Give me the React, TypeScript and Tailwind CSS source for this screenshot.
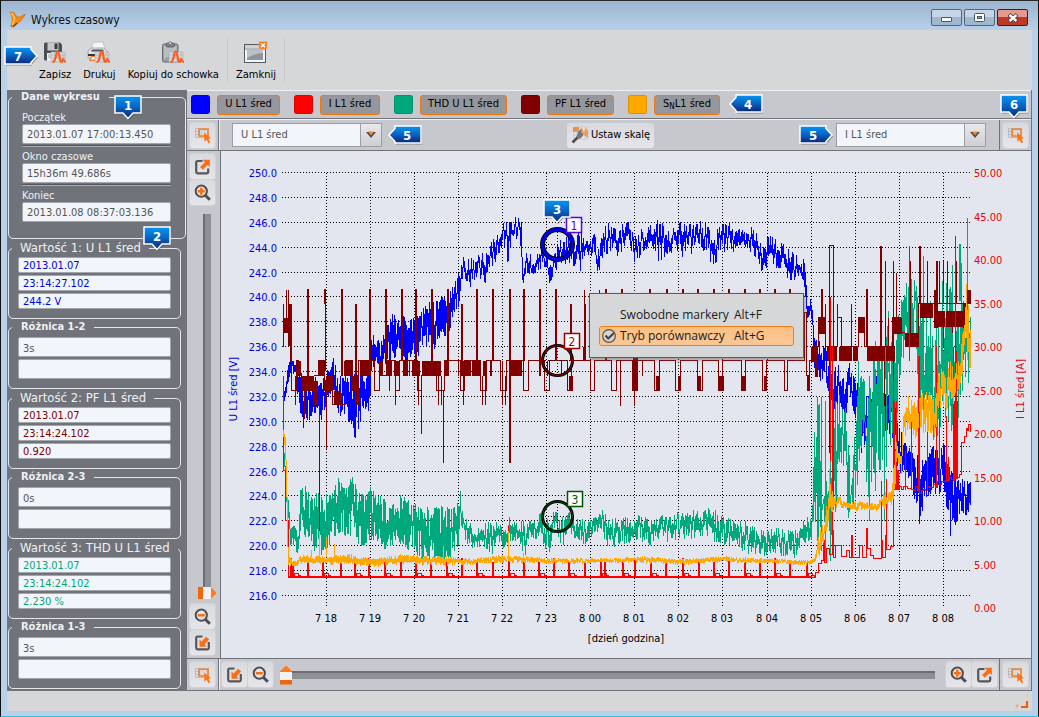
import React from "react";

type Dir = "down" | "right" | "left";

const UI = "font-['DejaVu_Sans_Condensed','DejaVu_Sans',sans-serif]";

/* ---------- numbered callouts ---------- */

function CalloutShape({ n, dir }: { n: number; dir: Dir }) {
  const shape = {
    down: "M2 2H28V19H20L15 24.500L10 19H2Z",
    right: "M2 2H28V4.500L34 11L28 17.500V19H2Z",
    left: "M34 2H8V4.500L2 11L8 17.500V19H34Z",
  }[dir];
  return (
    <>
      <defs>
        <linearGradient id={"callout" + dir + n} x1="0" y1="0" x2="0" y2="1">
          <stop offset="0" stopColor="#0795f0" />
          <stop offset="0.45" stopColor="#0868c8" />
          <stop offset="1" stopColor="#0b257a" />
        </linearGradient>
      </defs>
      <path d={shape} transform="translate(1 1.500)" fill="#333" opacity="0.45" />
      <path d={shape} fill={"url(#callout" + dir + n + ")"} stroke="#fff" strokeWidth="1.5" />
      <text
        x={dir === "left" ? 20 : 15}
        y="15.500"
        textAnchor="middle"
        fill="#fff"
        className="font-['DejaVu_Sans_Condensed',sans-serif] text-[13px] font-bold"
      >
        {n}
      </text>
    </>
  );
}

function Callout({ n, dir, className = "" }: { n: number; dir: Dir; className?: string }) {
  return (
    <svg viewBox="0 0 36 27" className={"pointer-events-none h-[27px] w-9 shrink-0 " + className}>
      <CalloutShape n={n} dir={dir} />
    </svg>
  );
}

/* ---------- icons ---------- */

const Pulse = () => (
  <g>
    <path d="M8 11h14v10H8z" fill="#d9dbde" stroke="#a5a7ab" strokeWidth="0.6" />
    <path d="M8 14h14M8 17h14M12 11v10M16 11v10M20 11v10" stroke="#a9abb0" strokeWidth="0.6" />
    <path
      d="M9.500 21C13.500 21.500 12.500 10.500 14.800 10.500C17 10.500 16.200 21 18.200 21C19.800 21 19 18 20 18C21 18 20.500 21 23 21"
      fill="none"
      stroke="#ff5a14"
      strokeWidth="2.100"
    />
  </g>
);

const SaveIcon = () => (
  <svg viewBox="0 0 24 24" className="size-6">
    <path d="M1 3Q1 1.500 2.500 1.500H17L19 3.500V19.500H2.500Q1 19.500 1 18Z" fill="#4c4e53" />
    <path d="M4.500 1.500h11v8h-11z" fill="#c6c8cb" />
    <path d="M11.500 2.500h3v5.500h-3z" fill="#3a3b3f" />
    <path d="M4 12h12v8H4z" fill="#eceded" />
    <path d="M5 14h9M5 16h9" stroke="#999" strokeWidth="0.800" />
    <Pulse />
  </svg>
);

const PrintIcon = () => (
  <svg viewBox="0 0 24 24" className="size-6">
    <path d="M5 8V3L8 1H16L18 8Z" fill="#f6f6f6" stroke="#b8babd" strokeWidth="0.800" />
    <path d="M1 10L4 7H17L20 10V17H1Z" fill="#e3e4e6" stroke="#8f9196" strokeWidth="0.700" />
    <path d="M5 8.500H16L17 10.500H4Z" fill="#55575c" />
    <path d="M1 14H14" stroke="#303236" strokeWidth="2" />
    <path d="M4 15H14L15 20H2Z" fill="#ff7a2a" />
    <path d="M5 16H13L13.500 18.500H4Z" fill="#fff" />
    <Pulse />
  </svg>
);

const CopyIcon = () => (
  <svg viewBox="0 0 24 24" className="size-6">
    <rect x="1.500" y="3" width="15.500" height="18" rx="1.500" fill="#9aa0a7" stroke="#666a70" />
    <path d="M3 5L15.500 5V11L3 18Z" fill="#b9bec5" />
    <rect x="5" y="2" width="8.500" height="4" rx="1.500" fill="#80858c" stroke="#54575c" strokeWidth="0.800" />
    <circle cx="9.200" cy="2.200" r="1.500" fill="#dfe1e3" stroke="#55585d" strokeWidth="0.700" />
    <Pulse />
  </svg>
);

const CloseIcon = () => (
  <svg viewBox="0 0 24 24" className="size-6">
    <rect x="0.500" y="3.500" width="21" height="18" fill="#f4f5f6" stroke="#55585e" />
    <path d="M1 4h20v3H1z" fill="#cfd1d4" />
    <path d="M3 9h16v10H3z" fill="#8f959d" />
    <path d="M3 9H19V12Q11 12 3 17Z" fill="#bcc1c7" />
    <path d="M1 8h20" stroke="#5d6066" strokeWidth="0.800" />
    <rect x="15" y="0.500" width="8" height="7.500" fill="#f57a1c" stroke="#ffb27a" strokeWidth="0.600" />
    <path d="M17 2.300L21 6.300M21 2.300L17 6.300" stroke="#fff" strokeWidth="1.500" />
  </svg>
);

const SelectIcon = () => (
  <svg viewBox="0 0 18 18" className="size-[18px]">
    <path d="M1.500 2.500h13v9h-13zM1.500 5.500h13M1.500 8.500h13M4.500 2.500v9M8.500 2.500v9" fill="none" stroke="#b0b2b8" strokeWidth="0.800" />
    <rect x="5.200" y="3.200" width="8.800" height="6.800" fill="#d9d9dd" stroke="#f0883a" strokeWidth="1.700" />
    <path d="M10.200 6.500L17 12.200L14.400 12.700L16.200 16.200L14.400 17.200L12.700 13.800L10.400 15.800Z" fill="#ff7414" />
  </svg>
);

const BoxArrow = ({ inward = false }: { inward?: boolean }) => (
  <svg viewBox="0 0 18 18" className="size-[18px]">
    <path
      d={inward ? "M8.500 2.500H3.500Q2.200 2.500 2.200 4V14Q2.200 15.300 3.500 15.300H13.500Q14.800 15.300 14.800 14V8" : "M8.500 3H3.500Q2.200 3 2.200 4.500V14Q2.200 15.300 3.500 15.300H12.800Q14.200 15.300 14.200 14V10.500"}
      fill="none"
      stroke="#56575d"
      strokeWidth="2.200"
    />
    {inward ? (
      <path d="M5.500 12.800V5.500L7.600 7.400L12.200 2.700L15.200 5.600L10.600 10.400L12.700 12.800Z" fill="#ff6b12" />
    ) : (
      <path d="M15.800 1.800V9L13.500 6.900L8.900 11.700L6 9L10.900 4.200L8.700 1.800Z" fill="#ff6b12" />
    )}
  </svg>
);

const Lens = ({ plus = false }: { plus?: boolean }) => (
  <svg viewBox="0 0 18 18" className="size-[18px]">
    <path d="M11 11L15.800 15.800" stroke="#4c4e54" strokeWidth="3" />
    <circle cx="7.300" cy="7.200" r="5.600" fill="#e9e4e1" stroke="#4c4e54" strokeWidth="2" />
    <path d={plus ? "M3.800 7.200h7M7.300 3.700v7" : "M3.800 7.200h7"} stroke="#f66f16" strokeWidth="2.500" />
  </svg>
);

const ScaleIcon = () => (
  <svg viewBox="0 0 18 18" className="size-[18px]">
    <path d="M3 1h14v12H3z" fill="#e9e9e9" stroke="#c9c9cc" strokeWidth="0.700" />
    <path d="M2 1H8V6H2Z" fill="#f28a3c" />
    <path d="M9 9V4L11 1.500L13 7L15 1.500L17 5V12L13 9Z" fill="#f89445" />
    <path d="M6 1v12M10 1v12M14 1v12M3 5h14M3 9h14" stroke="#b4b4b8" strokeWidth="0.600" />
    <path d="M1.500 16.500L8 10" stroke="#4b4d52" strokeWidth="2.600" />
    <path d="M5.500 11L7 6L10.500 2.500L10 6L12 8L12 10L8.500 13Z" fill="#74767c" />
  </svg>
);

function ToolButton({ label, children }: { label: string; children: React.ReactNode }) {
  return (
    <button
      aria-label={label}
      className="flex size-[25px] shrink-0 items-center justify-center rounded-[3px] bg-linear-to-b from-[#d9dadd] to-[#e6e6ea] shadow-[0_0_0_1px_#d2d2d6]"
    >
      {children}
    </button>
  );
}

/* ---------- title bar and tool bar ---------- */

function TitleBar() {
  const frame = "flex h-[17px] w-[31px] items-center justify-center rounded-[2px] border";
  return (
    <header className="flex h-[30px] shrink-0 items-center border-t border-[#26282c] bg-linear-to-b from-[#9cb5d0] to-[#b8cfe8] pt-2 pr-[10px] pl-2">
      <svg viewBox="0 0 18 18" className="size-[18px]">
        <path d="M1.500 1L5 1.500L7 5L10 6.500L16.500 3L12 9.500L5 15.500L2 15.500L3.500 9Z" fill="#f68c12" stroke="#d8690a" strokeWidth="0.800" />
        <path d="M2.500 2L5.500 7L3.500 14" fill="none" stroke="#ffc44a" strokeWidth="1.600" />
        <path d="M4 15.500L8 12" stroke="#5d4227" strokeWidth="1.200" />
      </svg>
      <h1 className="ml-1 grow text-[12px] leading-4 font-normal text-[#111]">Wykres czasowy</h1>
      <div className="mb-1 flex gap-[2px]">
        <button aria-label="Minimalizuj" className={frame + " border-[#56677c] bg-linear-to-b from-[#c4d5e7] from-50% to-[#9fb8d2] to-50%"}>
          <span className="mt-1 h-[5px] w-[11px] rounded-[1px] border border-[#4a5564] bg-white" />
        </button>
        <button aria-label="Maksymalizuj" className={frame + " border-[#56677c] bg-linear-to-b from-[#c4d5e7] from-50% to-[#9fb8d2] to-50%"}>
          <svg viewBox="0 0 11 9" className="h-[9px] w-[11px]">
            <rect x="0.500" y="0.500" width="10" height="8" rx="1" fill="#fff" stroke="#4a5564" />
            <rect x="3.500" y="3.500" width="4" height="2" fill="#8fa9c5" stroke="#4a5564" />
          </svg>
        </button>
        <button aria-label="Zamknij okno" className={frame + " border-[#5a1410] bg-linear-to-b from-[#e39a8c] from-50% to-[#bc3a26] to-50%"}>
          <svg viewBox="0 0 12 10" className="h-[10px] w-3">
            <path d="M2 1.500L10 8.500M10 1.500L2 8.500" stroke="#4a3a40" strokeWidth="4" />
            <path d="M2.500 2L9.500 8M9.500 2L2.500 8" stroke="#fff" strokeWidth="2.400" />
          </svg>
        </button>
      </div>
    </header>
  );
}

function Toolbar() {
  const item = "flex flex-col items-center gap-[2px] text-[11px] leading-4 text-black";
  return (
    <div className="relative flex h-[60px] shrink-0 bg-[#d6d7d9] pt-[11px] pl-8">
      <Callout n={7} dir="right" className="absolute top-[15px] -left-1" />
      <div className="flex items-start gap-3">
        <button className={item}>
          <SaveIcon />
          Zapisz
        </button>
        <button className={item}>
          <PrintIcon />
          Drukuj
        </button>
        <button className={item}>
          <CopyIcon />
          Kopiuj do schowka
        </button>
      </div>
      <div className="mx-2 -mt-1 h-[46px] w-px bg-[#c9cacd]" />
      <button className={item + " self-start"}>
        <CloseIcon />
        Zamknij
      </button>
      <div className="mx-2 -mt-1 h-[46px] w-px bg-[#c9cacd]" />
    </div>
  );
}

/* ---------- side panel ---------- */

const field = "block w-full rounded-[2px] border border-[#a3a7ad] bg-[#f2f5fa] text-[11px] outline-none";

function TimeField({ label, value, last }: { label: string; value: string; last?: boolean }) {
  return (
    <div className={last ? "" : "mb-[3px]"}>
      <label className="block text-[11px] leading-[13px] text-[#eff1f4]">
        {label}
        <input readOnly defaultValue={value} className={field + " h-5 px-1 pt-px text-[#555]"} />
      </label>
      {!last && <div className="mt-px h-[2px] border-t border-[#54565c] bg-[#a9abb0]" />}
    </div>
  );
}

function ValueGroup({ title, values, color }: { title: string; values: string[]; color: string }) {
  return (
    <fieldset className="mr-[6px] ml-px min-w-0 rounded-[5px] border border-[#e4e6ea] px-[9px] pb-[9px]">
      <legend className="ml-[-6px] px-2 text-[13px] leading-4 whitespace-nowrap text-[#eff1f4]">{title}</legend>
      <div className="flex flex-col gap-[2px] pt-px">
        {values.map((v, i) => (
          <input key={i} aria-label={title + " " + (i + 1)} readOnly defaultValue={v} className={field + " h-4 px-1 pt-[2px] " + color} />
        ))}
      </div>
    </fieldset>
  );
}

function DiffGroup({ title, value }: { title: string; value: string }) {
  return (
    <fieldset className="mr-[6px] ml-px min-w-0 rounded-[5px] border border-[#e4e6ea] px-[9px] pb-[9px]">
      <legend className="ml-[-6px] px-[9px] text-[11px] leading-[14px] font-bold text-[#eff1f4]">{title}</legend>
      <div className="flex flex-col gap-[2px] pt-[3px]">
        <input aria-label={title + " czas"} readOnly defaultValue={value} className={field + " h-5 px-1 pt-[2px] text-[#555]"} />
        <input aria-label={title + " wartość"} readOnly className={field + " h-5 px-1 pt-[2px] text-[#555]"} />
      </div>
    </fieldset>
  );
}

function SidePanel() {
  return (
    <aside className="relative flex w-[180px] shrink-0 flex-col gap-px bg-[#70737a]">
      <fieldset className="mr-px ml-px min-w-0 rounded-[5px] border border-[#e4e6ea] pr-[14px] pb-4 pl-[13px]">
        <legend className="ml-[-10px] px-[9px] text-[11px] leading-[14px] font-bold text-[#eff1f4]">Dane wykresu</legend>
        <div className="pt-[7px]">
          <TimeField label="Początek" value="2013.01.07 17:00:13.450" />
          <TimeField label="Okno czasowe" value="15h36m 49.686s" />
          <TimeField label="Koniec" value="2013.01.08 08:37:03.136" last />
        </div>
      </fieldset>
      <ValueGroup title="Wartość 1: U L1 śred" values={["2013.01.07", "23:14:27.102", "244.2 V"]} color="text-[#0000e6]" />
      <DiffGroup title="Różnica 1-2" value="3s" />
      <ValueGroup title="Wartość 2: PF L1 śred" values={["2013.01.07", "23:14:24.102", "0.920"]} color="text-[#800000]" />
      <DiffGroup title="Różnica 2-3" value="0s" />
      <ValueGroup title="Wartość 3: THD U L1 śred" values={["2013.01.07", "23:14:24.102", "2.230 %"]} color="text-[#00a57b]" />
      <DiffGroup title="Różnica 1-3" value="3s" />
      <Callout n={1} dir="down" className="absolute top-1 left-[106px]" />
      <Callout n={2} dir="down" className="absolute top-[135px] left-[135px]" />
    </aside>
  );
}

/* ---------- chart ---------- */

function rng(seed: number) {
  let s = seed;
  return () => {
    s = (s * 1664525 + 1013904223) % 4294967296;
    return s / 4294967296;
  };
}

type Band = [number, number, number];
type Line = [number, number, number];

/* Noisy line: each column covers a random stretch inside the upper and lower envelope. */
function bandPath(keys: Band[], seed: number, fill: number, holes = 0): string {
  const r = rng(seed);
  let d = "";
  let k = 0;
  for (let x = keys[0][0]; x <= keys[keys.length - 1][0]; x++) {
    while (k < keys.length - 2 && keys[k + 1][0] <= x) k++;
    const [x0, t0, b0] = keys[k];
    const [x1, t1, b1] = keys[k + 1];
    const f = (x - x0) / (x1 - x0);
    const top = t0 + (t1 - t0) * f;
    const h = b0 + (b1 - b0) * f - top;
    const len = h * Math.min(1, fill * (0.5 + r()));
    const a = Math.round(top + (h - len) * r());
    const b = Math.round(a + len);
    if (r() < holes) continue;
    d += (d ? "L" : "M") + x + " " + a + "L" + x + " " + b;
  }
  return d;
}

const voltage: Band[] = [
  [283, 384, 410], [288, 362, 385], [291, 356, 366], [296, 364, 385], [300, 370, 420], [306, 378, 434], [312, 376, 412], [318, 374, 416], [323, 378, 426],
  [329, 362, 402], [333, 352, 392], [338, 374, 412], [344, 378, 428], [350, 372, 430], [355, 368, 442], [360, 360, 420], [364, 370, 408], [370, 358, 412], [371, 333, 376],
  [375, 336, 362], [380, 342, 372], [385, 328, 364], [390, 313, 364], [400, 314, 352], [406, 312, 362], [414, 318, 358], [423, 303, 352], [432, 299, 352],
  [440, 294, 338], [447, 291, 340], [452, 285, 318], [459, 268, 305],
];

const voltageNight: Band[] = [
  [459, 268, 300], [463, 256, 280], [470, 255, 290], [478, 251, 275], [484, 246, 284], [493, 238, 266],
  [500, 228, 253], [506, 216, 244], [508, 222, 282], [512, 219, 238], [519, 212, 238], [521, 222, 270], [522, 270, 290], [524, 250, 275], [535, 255, 273], [541, 244, 270],
  [546, 252, 275], [551, 260, 288], [557, 244, 266], [563, 236, 264], [570, 230, 264], [575, 242, 266], [580, 218, 270], [585, 243, 256], [592, 230, 258],
  [597, 240, 272], [607, 222, 254], [612, 226, 252], [618, 230, 256], [626, 217, 244], [634, 232, 265], [642, 226, 252], [650, 222, 248], [659, 219, 264],
  [670, 231, 252], [678, 220, 258], [690, 223, 254], [700, 216, 246], [712, 232, 268], [722, 218, 252], [728, 220, 250], [735, 230, 258], [745, 228, 250],
  [753, 226, 254], [762, 238, 273], [773, 234, 266], [780, 241, 270], [790, 248, 287], [798, 257, 278], [803, 258, 282],
];

const voltageLate: Band[] = [
  [803, 258, 282], [804, 262, 306], [808, 300, 320], [812, 295, 325],
  [814, 335, 370], [821, 342, 384], [824, 336, 378], [828, 358, 392], [833, 368, 418], [838, 362, 412], [845, 378, 420], [849, 363, 392], [856, 378, 425],
  [860, 386, 450], [864, 395, 460], [870, 390, 420], [877, 368, 398], [883, 390, 430], [891, 395, 435], [896, 408, 470], [905, 440, 475], [910, 446, 482], [916, 450, 508],
  [919, 455, 530], [925, 458, 500], [932, 446, 492], [938, 448, 500], [943, 440, 488], [948, 465, 540], [955, 474, 528], [960, 474, 512], [965, 478, 518], [970, 474, 512],
];

const distortion: Band[] = [
  [283, 448, 465], [284, 450, 465], [287, 480, 520], [290, 528, 545], [294, 525, 545], [298, 535, 557], [300, 490, 530], [304, 484, 536], [310, 496, 536], [314, 498, 550],
  [318, 488, 545], [323, 503, 560], [326, 494, 550], [331, 494, 540], [338, 478, 532], [345, 490, 535], [352, 474, 540], [358, 492, 545], [365, 496, 545],
  [370, 484, 540], [376, 496, 540], [383, 496, 550], [390, 508, 545], [400, 494, 545], [405, 491, 550], [412, 503, 550], [420, 504, 560], [430, 508, 558],
  [440, 506, 562], [450, 508, 562], [456, 506, 548], [458, 500, 545],
];

const distortionNight: Band[] = [
  [458, 500, 545], [460, 488, 520], [463, 516, 538], [468, 520, 545], [475, 530, 548], [482, 524, 545], [492, 518, 556], [500, 524, 548],
  [511, 514, 545], [518, 523, 542], [523, 520, 560], [530, 520, 538], [541, 512, 540], [548, 518, 556], [556, 508, 532], [561, 518, 552], [567, 510, 532],
  [575, 516, 538], [580, 518, 548], [592, 516, 536], [601, 508, 530], [607, 516, 546], [618, 516, 548], [632, 514, 542], [646, 516, 545], [660, 515, 543],
  [675, 512, 540], [690, 510, 538], [706, 506, 538], [716, 510, 545], [730, 516, 544], [745, 520, 552], [755, 524, 554], [765, 528, 557], [775, 526, 554],
  [790, 530, 560], [800, 528, 558], [804, 518, 545], [812, 505, 545],
];

const distortionLate: Band[] = [
  [812, 500, 545], [815, 396, 530], [819, 400, 525], [821, 450, 530], [826, 480, 540], [832, 470, 540], [835, 380, 520], [840, 392, 460], [845, 405, 470], [848, 440, 530],
  [855, 430, 505], [858, 375, 500], [863, 360, 445], [867, 380, 500], [875, 340, 490], [880, 325, 480], [885, 310, 485], [890, 320, 450], [895, 310, 445], [899, 300, 440],
  [903, 288, 360], [910, 276, 345], [915, 280, 350], [918, 290, 420], [922, 292, 430], [928, 310, 432], [934, 330, 445], [938, 300, 440], [943, 270, 420],
  [949, 262, 415], [952, 270, 430], [956, 330, 420], [960, 243, 420], [964, 300, 410], [967, 280, 400], [970, 310, 396],
];

const power: Band[] = [
  [283, 424, 440], [285, 430, 455], [287, 500, 540], [288, 553, 565], [292, 561, 566], [296, 560, 566], [300, 555, 563], [310, 554, 563], [320, 556, 564], [350, 554, 564],
  [376, 558, 566], [400, 554, 563], [440, 556, 565], [458, 557, 564], [461, 558, 567], [475, 558, 563], [500, 555, 562], [560, 558, 563], [600, 558, 562], [640, 556, 562],
  [680, 559, 564], [720, 556, 561], [780, 559, 563], [808, 560, 565], [814, 558, 562], [819, 530, 556], [824, 518, 542], [827, 492, 530], [829, 476, 510], [832, 488, 512],
  [838, 495, 505], [846, 502, 510], [860, 501, 510], [876, 503, 510], [884, 492, 508], [892, 490, 508], [894, 430, 490], [897, 445, 475], [901, 456, 474],
  [903, 412, 450], [908, 395, 430], [914, 402, 440], [920, 393, 432], [928, 386, 436], [933, 395, 440], [939, 368, 420], [945, 372, 418], [950, 360, 400],
  [955, 368, 405], [960, 340, 390], [963, 325, 372], [966, 285, 362], [970, 320, 372],
];

const pulses = [290, 292, 307, 322, 340, 354, 368, 384, 400, 415, 430, 446, 461, 476, 492, 508, 523, 538, 553, 568, 584, 600, 604, 622, 634, 650, 665, 682, 698, 713, 728, 744, 759, 774, 789, 806];

function currentPath(): string {
  let d = "M283 400V470H285V520H288V577";
  pulses.forEach((x, i) => {
    d += `H${x}V${i % 3 ? 562 : 558}h1V577`;
    if (i % 2) d += "h1v-4h4v2h2v2";
  });
  d += "H811V577H815V572H818V563H821V560H823V540H824V562H826V548H829V554H832V530H833V557H835V545H841V556H846V550H849V557H851V535H852V557H859V545H862V557H866V528H867V548H870V555H873V558H881V540H882V557H885V535H886V549H890V546H893V402H894V489H897V470H898V489";
  const r = rng(5);
  let x = 899;
  while (x < 962) {
    const y = Math.round((x < 920 ? 490 : 494 - (x - 920) * 0.4) - r() * 5);
    d += `V${y}H${x}`;
    x += 2;
  }
  d += "V442H964V436H966V428H967V430H968V424H970V431";
  return d;
}

const powerFactorLine =
  "M283 303V346M286 289V330M288 289V345M290 303V360M291 345V390H296V360H298V375H300M313 375H318V360H324V390H327M332 375V404H345V360H352M352 375V390H357V404H358V360H374V390H379V375H386V360H395V390H399V360H417V390H421V375H436V390H444V360H460V390H464V360H480V390H486V360H500V390H506V360H523V390H528V360H544V390H549V360H567V390H571V360H590V390H594V360H611V390H616V360H632V390H637V360H654V390H659V360H675V390H680V360H697V390H702V360H718V390H722V360H741V390H745V360H762V390H766V360H784V390H787V360H804V312H806V375H809V360H812V346H818V317H825V346H829V245H833V346H837V303M837 317H841V346H858V317H864V346H892V317H900V332H904M918 332V303H970";

const powerFactorBlocks: [number, number, number, number][] = [
  [283, 317, 6, 15], [287, 303, 4, 42], [296, 360, 4, 15], [300, 375, 13, 15], [312, 380, 5, 24], [318, 360, 6, 15], [327, 375, 5, 15], [333, 390, 7, 14], [343, 360, 9, 15],
  [350, 375, 7, 15], [354, 390, 5, 14], [359, 360, 9, 15], [378, 360, 4, 15], [386, 360, 5, 15], [393, 360, 5, 15], [402, 360, 5, 15], [411, 360, 8, 15], [421, 360, 19, 15],
  [444, 360, 4, 15], [462, 360, 7, 15], [471, 360, 8, 15], [482, 360, 4, 15], [510, 360, 11, 15], [568, 375, 4, 15], [632, 356, 5, 34], [655, 375, 3, 15],
  [677, 375, 3, 15], [697, 375, 3, 15], [718, 375, 5, 15], [741, 375, 3, 15], [763, 375, 3, 15], [806, 375, 3, 15],
  [582, 346, 3, 14], [810, 346, 6, 15], [818, 317, 7, 16], [814, 360, 3, 16], [826, 346, 10, 14], [838, 346, 13, 14], [852, 346, 5, 14], [858, 317, 6, 15], [866, 346, 9, 14],
  [875, 346, 9, 14], [885, 346, 9, 14], [892, 317, 9, 16], [904, 332, 6, 14], [910, 332, 8, 14], [919, 303, 5, 14], [924, 303, 8, 14], [933, 303, 4, 24], [937, 310, 7, 16],
  [945, 310, 17, 16], [933, 289, 4, 14], [962, 303, 4, 24], [966, 289, 4, 14],
];

const powerFactorPeaks: Line[] = [
  [307, 288, 375], [324, 288, 303], [341, 288, 375], [355, 303, 375], [369, 288, 375], [385, 288, 360], [401, 288, 360], [415, 288, 375], [431, 288, 375], [447, 288, 375],
  [461, 303, 375], [476, 288, 360], [492, 288, 360], [509, 288, 462], [523, 288, 360], [539, 288, 375], [555, 288, 360], [570, 303, 360], [584, 303, 360], [605, 288, 360],
  [621, 288, 300], [649, 288, 300], [666, 288, 300], [682, 288, 300], [697, 288, 300], [713, 288, 300], [728, 288, 300], [744, 288, 300], [759, 288, 300], [774, 288, 300],
  [789, 288, 300], [821, 288, 317], [866, 288, 346], [880, 245, 346], [919, 245, 303], [936, 260, 303],
];

const powerFactorSpikes: Line[] = [
  [325, 303, 370], [584, 289, 303], [599, 289, 300], [295, 375, 404], [304, 375, 418], [319, 390, 530], [326, 375, 448], [395, 360, 404], [418, 375, 404], [421, 375, 433],
  [438, 375, 404], [441, 375, 404], [443, 390, 462], [463, 375, 404], [482, 375, 404], [485, 375, 404], [505, 375, 404], [547, 360, 375], [389, 360, 390], [409, 360, 375],
  [458, 360, 375], [470, 360, 375], [490, 360, 375], [491, 360, 375], [500, 360, 375], [502, 360, 404], [561, 360, 375], [594, 360, 375],
  [620, 360, 405], [634, 375, 405], [642, 360, 375], [825, 303, 346], [829, 360, 452], [851, 303, 346],
  [885, 260, 346], [888, 317, 346], [893, 260, 404], [896, 272, 317], [884, 346, 405], [910, 260, 332], [927, 260, 303], [939, 260, 303],
  [943, 260, 303], [947, 260, 303], [956, 260, 303], [943, 317, 346], [952, 317, 332], [835, 346, 360], [807, 375, 390],
];

const distortionSpikes: Line[] = [
  [817, 396, 540], [821, 396, 550], [825, 400, 560], [830, 430, 560], [858, 360, 420], [869, 375, 520], [884, 345, 520], [888, 310, 345], [911, 278, 345], [923, 255, 400],
  [930, 300, 420], [942, 280, 400], [952, 264, 400], [959, 243, 300], [960, 243, 300], [967, 217, 330], [818, 405, 540], [875, 340, 360], [948, 395, 420], [951, 400, 430],
];

const currentSpikes: Line[] = [
  [830, 296, 460], [832, 345, 545], [833, 400, 500], [893, 380, 489], [896, 400, 489], [905, 450, 489], [909, 245, 360], [911, 410, 489], [918, 355, 490], [919, 355, 489],
  [927, 415, 490], [936, 345, 487], [939, 400, 480], [946, 415, 480], [953, 346, 480], [954, 400, 480], [955, 235, 478], [956, 350, 478], [957, 400, 478], [948, 456, 480], [508, 525, 540], [895, 448, 489], [881, 480, 555], [886, 478, 545],
];

const powerSpikes: Line[] = [
  [319, 530, 560], [326, 536, 556], [334, 543, 556], [311, 549, 556], [421, 548, 556], [443, 545, 558], [508, 530, 558], [829, 468, 500], [523, 552, 556], [966, 283, 300],
];

const vlines = (list: Line[]) => list.map(([x, a, b]) => `M${x} ${a}V${b}`).join("");

const hourLabels = ["7 18", "7 19", "7 20", "7 21", "7 22", "7 23", "8 00", "8 01", "8 02", "8 03", "8 04", "8 05", "8 06", "8 07", "8 08"];
const voltLabels = Array.from({ length: 18 }, (_, i) => (250 - 2 * i).toFixed(1));
const ampLabels = Array.from({ length: 11 }, (_, i) => (50 - 5 * i).toFixed(2));

function Marker({ n, x, y, color, bx, by }: { n: number; x: number; y: number; color: string; bx: number; by: number }) {
  return (
    <g>
      <circle cx={x} cy={y} r="15" fill="none" stroke="#000" strokeWidth={n === 1 ? 5 : 3} />
      <circle cx={x} cy={y} r="15" fill="none" stroke={color} strokeWidth={n === 1 ? 3 : 1} />
      <path d={`M${x - 13} ${y}h26M${x} ${y - 13}v26`} stroke="#000" strokeDasharray="1 2" shapeRendering="crispEdges" />
      <rect x={bx} y={by} width="15" height="15" fill="#fff" stroke={n === 1 ? "#5a00e6" : color} strokeWidth="1.500" />
      <text x={bx + 7.5} y={by + 12} textAnchor="middle" fill={n === 1 ? "#5a00e6" : color} className="text-[12px]">
        {n}
      </text>
    </g>
  );
}

function Chart() {
  const yTop = 173;
  return (
    <svg viewBox="221 151 810 507" className="block h-full w-full text-[11px]" role="img" aria-label="Wykres czasowy">
      <g stroke="#000" strokeDasharray="1 2" shapeRendering="crispEdges">
        {voltLabels.map((_, i) => (
          <path key={i} d={`M282 ${Math.round(yTop + i * 24.88) - 0.5}H970`} />
        ))}
        {hourLabels.map((_, i) => (
          <path key={i} d={`M${Math.round(326 + i * 44.05) + 0.5} 173V608`} />
        ))}
      </g>
      <g fill="none" strokeWidth="1" strokeLinejoin="bevel" shapeRendering="crispEdges" transform="translate(0.5 0.5)">
        <path d={bandPath(voltage, 11, 0.62)} stroke="#0000ff" />
        <path d={bandPath(voltageNight, 17, 0.4)} stroke="#0000ff" />
        <path d={bandPath(voltageLate, 19, 0.6)} stroke="#0000ff" />
        <path d={bandPath(distortion, 23, 0.7)} stroke="#00a87e" />
        <path d={bandPath(distortionNight, 29, 0.45)} stroke="#00a87e" />
        <path d={bandPath(distortionLate, 31, 0.55, 0.25)} stroke="#00a87e" />
        <path d={vlines(distortionSpikes)} stroke="#00a87e" />
        <path d={powerFactorLine + vlines(powerFactorSpikes)} stroke="#800000" />
        <path d={vlines(powerFactorPeaks)} stroke="#800000" strokeWidth="2" />
        <g fill="#800000">
          {powerFactorBlocks.map(([x, y, w, h], i) => (
            <rect key={i} x={x} y={y} width={w} height={h} />
          ))}
        </g>
        <path d={currentPath() + "M283 375V420" + vlines(currentSpikes)} stroke="#ff0000" />
        <path d="M288 576.500H811M290 560V577M307 562V577M384 562V577M461 560V577M553 562V577M665 562V577" stroke="#ff0000" strokeWidth="2" />
        <path d={bandPath(power, 47, 0.55) + vlines(powerSpikes)} stroke="#ffa800" />
        <path d="M300 559.500H458" stroke="#ffa800" strokeWidth="3" />
      </g>
      <g fill="#0000e6" textAnchor="end">
        {voltLabels.map((t, i) => (
          <text key={t} x="277" y={Math.round(177 + i * 24.88)}>
            {t}
          </text>
        ))}
      </g>
      <g fill="#e6000c">
        {ampLabels.map((t, i) => (
          <text key={t} x="974" y={Math.round(177 + i * 43.5)}>
            {t}
          </text>
        ))}
      </g>
      <g fill="#000" textAnchor="middle">
        {hourLabels.map((t, i) => (
          <text key={t} x={Math.round(326 + i * 44.05)} y="622">
            {t}
          </text>
        ))}
        <text x="626" y="642">[dzień godzina]</text>
      </g>
      <text textAnchor="middle" fill="#0000e6" transform="translate(237 389) rotate(-90)">
        U L1 śred [V]
      </text>
      <text textAnchor="middle" fill="#e6000c" transform="translate(1024 389) rotate(-90)">
        I L1 śred [A]
      </text>
      <Marker n={1} x={557.5} y={244.5} color="#0000f0" bx={566.5} by={217.5} />
      <Marker n={2} x={557.5} y={360.5} color="#a00000" bx={564.5} by={333.5} />
      <Marker n={3} x={557.5} y={516.5} color="#005500" bx={567.5} by={491.5} />
      <g transform="translate(542 198)">
        <CalloutShape n={3} dir="down" />
      </g>
    </svg>
  );
}

function ContextMenu() {
  const row = "flex h-5 w-full items-center text-left text-[12px] font-['Open_Sans','Noto_Sans',sans-serif] text-[#1c1c1c]";
  return (
    <div className="absolute top-[142px] left-[368px] w-[215px] border border-[#5a5c62] bg-[#d6d7d9] px-[9px] py-[11px] shadow-[1px_2px_3px_#5558]">
      <button className={row + " border border-transparent"}>
        <span className="ml-5 w-[114px]">Swobodne markery</span>
        <span>Alt+F</span>
      </button>
      <button className={row + " mt-px rounded-[3px] border border-[#f57c14] bg-linear-to-b from-[#fbc184] to-[#fac796]"}>
        <svg viewBox="0 0 16 16" className="ml-px size-4">
          <circle cx="8" cy="8" r="6.400" fill="#d9d4cf" stroke="#55565a" strokeWidth="1.200" />
          <path d="M4.500 7.500L7.200 10.500L13 5" fill="none" stroke="#44464a" strokeWidth="2.200" />
        </svg>
        <span className="ml-[3px] w-[114px]">Tryb porównawczy</span>
        <span>Alt+G</span>
      </button>
    </div>
  );
}

/* ---------- controls around the chart ---------- */

const series = [
  { name: "U L1 śred", swatch: "bg-[#0000ff]", width: "w-[63px]" },
  { name: "I L1 śred", swatch: "bg-[#ff0000]", width: "w-[60px]" },
  { name: "THD U L1 śred", swatch: "bg-[#00a87e]", width: "w-[87px]" },
  { name: "PF L1 śred", swatch: "bg-[#800000]", width: "w-[67px]" },
  { name: "SN L1 śred", swatch: "bg-[#ffa800]", width: "w-[66px]" },
];

function SeriesBar() {
  return (
    <div className="flex h-[29px] items-center border-t border-b border-t-[#f0f1f4] border-b-[#70737a] bg-[#c7c8cd] pl-1">
      {series.map((s) => (
        <div key={s.name} className="mr-[14px] flex items-center gap-[7px]">
          <span className={"size-[19px] rounded-[3px] shadow-[inset_0_0_0_1px_#0002] " + s.swatch} />
          <button className={"h-5 rounded-[3px] border border-[#f2780c] bg-[#95979c] text-[11px] whitespace-nowrap text-black " + s.width}>
            {s.name.startsWith("SN") ? (
              <>
                S<span className="relative top-[2px] text-[8px]">N</span>L1 śred
              </>
            ) : (
              s.name
            )}
          </button>
        </div>
      ))}
      <Callout n={4} dir="left" className="mt-1 -ml-[6px]" />
      <Callout n={6} dir="down" className="relative z-10 mt-1 -mr-1 ml-auto" />
    </div>
  );
}

function SeriesSelect({ label, value }: { label: string; value: string }) {
  return (
    <div className="relative flex h-6 w-[150px] border border-[#9b9ea5] bg-[#f2f5fa]">
      <select aria-label={label} defaultValue={value} className="h-full w-full appearance-none bg-transparent pl-2 text-[11px] text-[#555] outline-none">
        {series.map((s) => (
          <option key={s.name}>{s.name}</option>
        ))}
      </select>
      <div className="pointer-events-none absolute inset-y-0 right-0 flex w-[21px] items-center justify-center border-l border-[#9b9ea5] bg-linear-to-b from-[#e9e9ec] to-[#cfcfd4]">
        <svg viewBox="0 0 10 8" className="h-2 w-[10px]">
          <path d="M0 1L5 7L10 1Z" fill="#4c4e54" />
          <path d="M2 0.500H8L5 4.500Z" fill="#ff8a1e" />
        </svg>
      </div>
    </div>
  );
}

const corner = "flex w-8 shrink-0 items-center justify-center border-[#70737a]";

function ScaleBar() {
  return (
    <div className="flex h-8 border-t border-b border-t-[#f0f1f4] border-b-[#70737a] bg-[#c7c8cd]">
      <div className={corner + " border-r"}>
        <ToolButton label="Zaznacz obszar lewej osi">
          <SelectIcon />
        </ToolButton>
      </div>
      <div className="flex grow items-center justify-between border-l border-[#f0f1f4] pr-[13px] pl-3">
        <div className="flex items-center">
          <SeriesSelect label="Lewa oś" value="U L1 śred" />
          <Callout n={5} dir="left" className="mt-1 ml-[5px]" />
        </div>
        <button className="flex h-[25px] items-center gap-[2px] rounded-[3px] bg-linear-to-b from-[#d9dadd] to-[#e6e6ea] px-1 text-[11px] text-black">
          <ScaleIcon />
          Ustaw skalę
        </button>
        <div className="flex items-center">
          <Callout n={5} dir="right" className="mt-1 mr-[2px]" />
          <SeriesSelect label="Prawa oś" value="I L1 śred" />
        </div>
      </div>
      <div className={corner + " border-l"}>
        <ToolButton label="Zaznacz obszar prawej osi">
          <SelectIcon />
        </ToolButton>
      </div>
    </div>
  );
}

function VerticalZoom() {
  return (
    <div className="flex w-[34px] shrink-0 flex-col gap-px border-r border-[#70737a] bg-[#c7c8cd] py-[3px] pl-[3px]">
      <ToolButton label="Powiększ do okna w pionie">
        <BoxArrow />
      </ToolButton>
      <ToolButton label="Powiększ w pionie">
        <Lens plus />
      </ToolButton>
      <input
        type="range"
        aria-label="Skala pionowa"
        defaultValue="0"
        className="mt-2 mb-1 ml-[5px] min-h-0 w-[23px] grow appearance-none bg-transparent [direction:rtl] [writing-mode:vertical-lr] [&::-webkit-slider-runnable-track]:w-2 [&::-webkit-slider-runnable-track]:border-l-2 [&::-webkit-slider-runnable-track]:border-[#6b6d75] [&::-webkit-slider-runnable-track]:bg-[#8e9098] [&::-webkit-slider-thumb]:-ml-[7px] [&::-webkit-slider-thumb]:h-3 [&::-webkit-slider-thumb]:w-[19px] [&::-webkit-slider-thumb]:appearance-none [&::-webkit-slider-thumb]:bg-[linear-gradient(90deg,#f0650e_0_5px,#f4f2f0_5px_13px,#ff7a1e_13px)] [&::-webkit-slider-thumb]:[clip-path:polygon(0_0,70%_0,100%_50%,70%_100%,0_100%)]"
      />
      <ToolButton label="Pomniejsz w pionie">
        <Lens />
      </ToolButton>
      <ToolButton label="Pełny zakres w pionie">
        <BoxArrow inward />
      </ToolButton>
    </div>
  );
}

function HorizontalZoom() {
  return (
    <div className="flex h-[33px] border-t border-b border-[#70737a] bg-[#c7c8cd]">
      <div className={corner + " border-r"}>
        <ToolButton label="Zaznacz obszar lewy dolny">
          <SelectIcon />
        </ToolButton>
      </div>
      <div className="flex grow items-center gap-px border-l border-[#f0f1f4] px-[2px]">
        <ToolButton label="Pełny zakres w poziomie">
          <BoxArrow inward />
        </ToolButton>
        <ToolButton label="Pomniejsz w poziomie">
          <Lens />
        </ToolButton>
        <input
          type="range"
          aria-label="Skala pozioma"
          defaultValue="0"
          className="mr-[10px] ml-[6px] h-5 min-w-0 grow appearance-none bg-transparent [&::-webkit-slider-runnable-track]:h-2 [&::-webkit-slider-runnable-track]:border-t-2 [&::-webkit-slider-runnable-track]:border-[#6b6d75] [&::-webkit-slider-runnable-track]:bg-[#8e9098] [&::-webkit-slider-thumb]:-mt-[7px] [&::-webkit-slider-thumb]:h-[19px] [&::-webkit-slider-thumb]:w-3 [&::-webkit-slider-thumb]:appearance-none [&::-webkit-slider-thumb]:bg-[linear-gradient(0deg,#f0650e_0_5px,#f4f2f0_5px_13px,#ff7a1e_13px)] [&::-webkit-slider-thumb]:[clip-path:polygon(50%_0,100%_30%,100%_100%,0_100%,0_30%)]"
        />
        <ToolButton label="Powiększ w poziomie">
          <Lens plus />
        </ToolButton>
        <ToolButton label="Powiększ do okna w poziomie">
          <BoxArrow />
        </ToolButton>
      </div>
      <div className={corner + " border-l"}>
        <ToolButton label="Zaznacz obszar prawy dolny">
          <SelectIcon />
        </ToolButton>
      </div>
    </div>
  );
}

export default function App() {
  return (
    <div className={"flex min-h-screen flex-col border-r border-b border-l border-r-[#101010] border-b-[#2fc3d6] border-l-[#101010] bg-[#b9d0ea] " + UI}>
      <TitleBar />
      <div className="mr-[6px] mb-[5px] ml-[6px] flex grow flex-col">
        <Toolbar />
        <main className="flex grow">
          <SidePanel />
          <section className="flex min-w-0 grow flex-col border-r border-[#70737a]">
            <SeriesBar />
            <ScaleBar />
            <div className="flex grow">
              <VerticalZoom />
              <div className="relative min-w-0 grow bg-[#e3e6ee]">
                <Chart />
                <ContextMenu />
              </div>
            </div>
            <HorizontalZoom />
          </section>
        </main>
        <footer className="flex h-5 shrink-0 items-end justify-end bg-[#d6d7d9] pr-[2px] pb-[2px]">
          <svg viewBox="0 0 16 16" className="size-4">
            <circle cx="3" cy="13" r="1.400" fill="#e3a98c" />
            <circle cx="13" cy="3" r="1.400" fill="#f3c8a8" />
            <path d="M7 14H13V8" fill="none" stroke="#f0600e" strokeWidth="2.200" />
          </svg>
        </footer>
      </div>
    </div>
  );
}
